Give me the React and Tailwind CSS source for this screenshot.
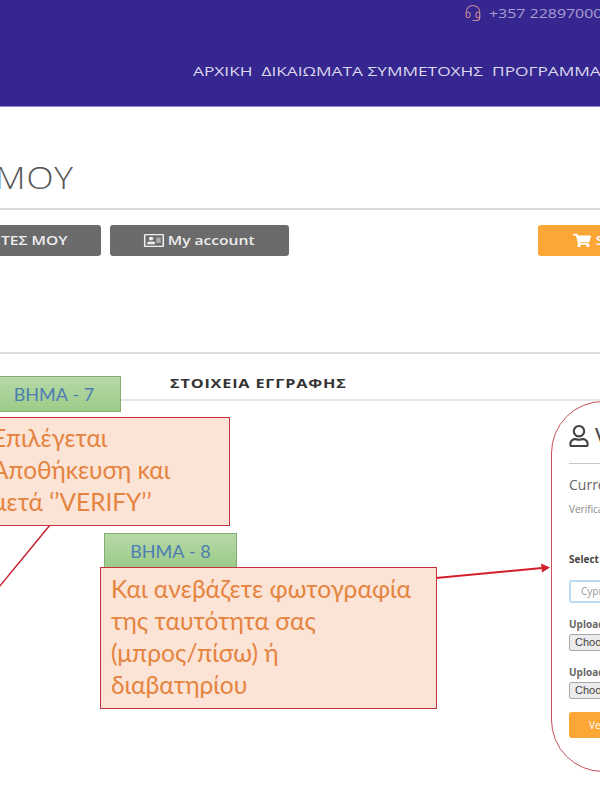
import React from 'react';
import { Headset } from 'lucide-react';
import { FaRegAddressCard, FaShoppingCart, FaRegUser } from 'react-icons/fa';

const open = "font-['Open_Sans',sans-serif]";
const note = "font-['Lato','Open_Sans',sans-serif]";

function Step({ label, className }) {
  return (
    <div className={`absolute flex items-center justify-center bg-gradient-to-b from-[#b7d8a8] to-[#9ccb88] border border-[#84ad70] text-[#4d7db3] text-[18px] ${note} ${className}`}>
      {label}
    </div>
  );
}

export default function App() {
  return (
    <div className={`relative w-[600px] h-[800px] overflow-hidden bg-white ${open}`}>
      {/* HEADER */}
      <header className="h-[107px] bg-[#36268f] border-b border-[#8d84cc] flex flex-col">
        <div className="pt-[3px] pl-[464px] flex items-center gap-[7px] whitespace-nowrap text-[#a99fd0] text-[13.5px]">
          <Headset size={18} strokeWidth={1.5} className="text-[#c98a9a] shrink-0" />
          <span className="origin-left scale-x-[1.18]">+357 22897000</span>
        </div>
        <nav className="mt-[38px] pl-[193px] flex gap-[7px] whitespace-nowrap font-medium text-[#dcd9ee] text-[13.5px] origin-[193px_center] scale-x-[1.28]">
          <span>ΑΡΧΙΚΗ</span>
          <span>ΔΙΚΑΙΩΜΑΤΑ ΣΥΜΜΕΤΟΧΗΣ</span>
          <span>ΠΡΟΓΡΑΜΜΑ</span>
        </nav>
      </header>

      {/* TITLE */}
      <h1 className="mt-[50px] -ml-[5px] h-[51px] text-[31px] leading-[40px] font-light text-[#555] tracking-wide origin-left scale-x-[1.14]">ΜΟΥ</h1>
      <div className="h-[2px] bg-[#d9d9d9]" />

      {/* BUTTONS */}
      <div className="mt-[15px] flex items-center -ml-[20px] -mr-[90px]">
        <div className="w-[121px] h-[31px] rounded-[3px] bg-[#6b6b6b] text-[#eee] text-[13px] font-semibold flex items-center justify-end pr-[34px]">
          <span className="origin-right scale-x-[1.2]">ΤΕΣ ΜΟΥ</span>
        </div>
        <div className="ml-[9px] w-[179px] h-[31px] rounded-[3px] bg-[#6b6b6b] text-[#eee] text-[13px] font-semibold flex items-center justify-center">
          <div className="flex items-center gap-[3px] scale-x-[1.2]">
            <FaRegAddressCard size={17} />
            My account
          </div>
        </div>
        <div className="ml-auto w-[152px] h-[31px] rounded-[3px] bg-[#fca636] text-[#fff] text-[13px] font-semibold flex items-center pl-[35px] whitespace-nowrap">
          <div className="flex items-center gap-[4px] origin-left scale-x-[1.2]">
            <FaShoppingCart size={15} />
            Shop
          </div>
        </div>
      </div>

      <div className="mt-[96px] h-[2px] bg-[#dcdcdc]" />

      {/* TAB */}
      <div className="h-[47px] border-b-2 border-[#e6e6e6] pl-[170px] pt-[19px] text-[13px] leading-[20px] font-bold tracking-[0.05em] text-[#333]">
        <span className="inline-block origin-left scale-x-[1.25]">ΣΤΟΙΧΕΙΑ ΕΓΓΡΑΦΗΣ</span>
      </div>

      {/* VERIFY PANEL */}
      <div className="flex justify-end -mr-[80px]">
        <div className="w-[129px] h-[371px] rounded-[52px] border-[1.5px] border-[#c9505c] pl-[17px] pt-[22px] overflow-hidden whitespace-nowrap">
          <div className="flex items-center gap-[5px] h-[24px] text-[#444] text-[24px]">
            <FaRegUser size={22} className="shrink-0 -ml-[1px]" />
            <span>Verify</span>
          </div>
          <div className="mt-[15px] h-px bg-[#c8c8c8]" />
          <div className="mt-[13px] text-[14px] leading-[16px] text-[#666]">Current</div>
          <div className="mt-[9px] text-[10px] leading-[14px] text-[#888]">Verification</div>
          <div className="mt-[36px] text-[10px] leading-[14px] font-bold text-[#444]">Select</div>
          <div className="mt-[14px] h-[23px] rounded-[3px] border-2 border-[#bcdcf2] pl-[10px] flex items-center text-[10px] text-[#999]">Cyprus</div>
          <div className="mt-[14px] text-[10px] leading-[14px] font-bold text-[#666]">Upload</div>
          <div className="mt-[3px] h-[17px] w-[70px] rounded-[2px] border border-[#aaa] bg-[#ececec] pl-[5px] flex items-center text-[11px] text-[#444] font-['Liberation_Sans',sans-serif]">Choose</div>
          <div className="mt-[14px] text-[10px] leading-[14px] font-bold text-[#666]">Upload</div>
          <div className="mt-[3px] h-[17px] w-[70px] rounded-[2px] border border-[#aaa] bg-[#ececec] pl-[5px] flex items-center text-[11px] text-[#444] font-['Liberation_Sans',sans-serif]">Choose</div>
          <div className="mt-[13px] h-[26px] rounded-[3px] bg-[#fca636] pl-[20px] flex items-center text-[10px] text-white">Verify</div>
        </div>
      </div>

      {/* SLIDE ANNOTATIONS */}
      <svg className="absolute left-0 top-0 pointer-events-none" width="600" height="800">
        <line x1="50" y1="525" x2="-5" y2="592" stroke="#c5222f" strokeWidth="1.5" />
        <line x1="436" y1="578" x2="542" y2="568" stroke="#d3202a" strokeWidth="2" />
        <polygon points="550,567.5 541,563.5 542,572.5" fill="#d3202a" />
      </svg>

      <Step label="ΒΗΜΑ - 7" className="-left-[13px] top-[376px] w-[134px] h-[36px]" />
      <div className={`absolute -left-[10px] top-[417px] w-[240px] h-[109px] bg-[#fbe3d6] border border-[#c5303f] pl-[1px] pt-[4px] text-[#e5843f] text-[24.4px] leading-[32px] whitespace-nowrap ${note}`}>
        <div>Επιλέγεται</div>
        <div>Αποθήκευση και</div>
        <div>μετά ‘’VERIFY’’</div>
      </div>

      <Step label="ΒΗΜΑ - 8" className="left-[104px] top-[533px] w-[133px] h-[36px]" />
      <div className={`absolute left-[100px] top-[567px] w-[337px] h-[142px] bg-[#fbe3d6] border border-[#c5303f] pl-[10px] pt-[5px] text-[#e5843f] text-[24.6px] leading-[32px] whitespace-nowrap ${note}`}>
        <div>Και ανεβάζετε φωτογραφία</div>
        <div>της ταυτότητα σας</div>
        <div>(μπρος/πίσω) ή</div>
        <div>διαβατηρίου</div>
      </div>
    </div>
  );
}
